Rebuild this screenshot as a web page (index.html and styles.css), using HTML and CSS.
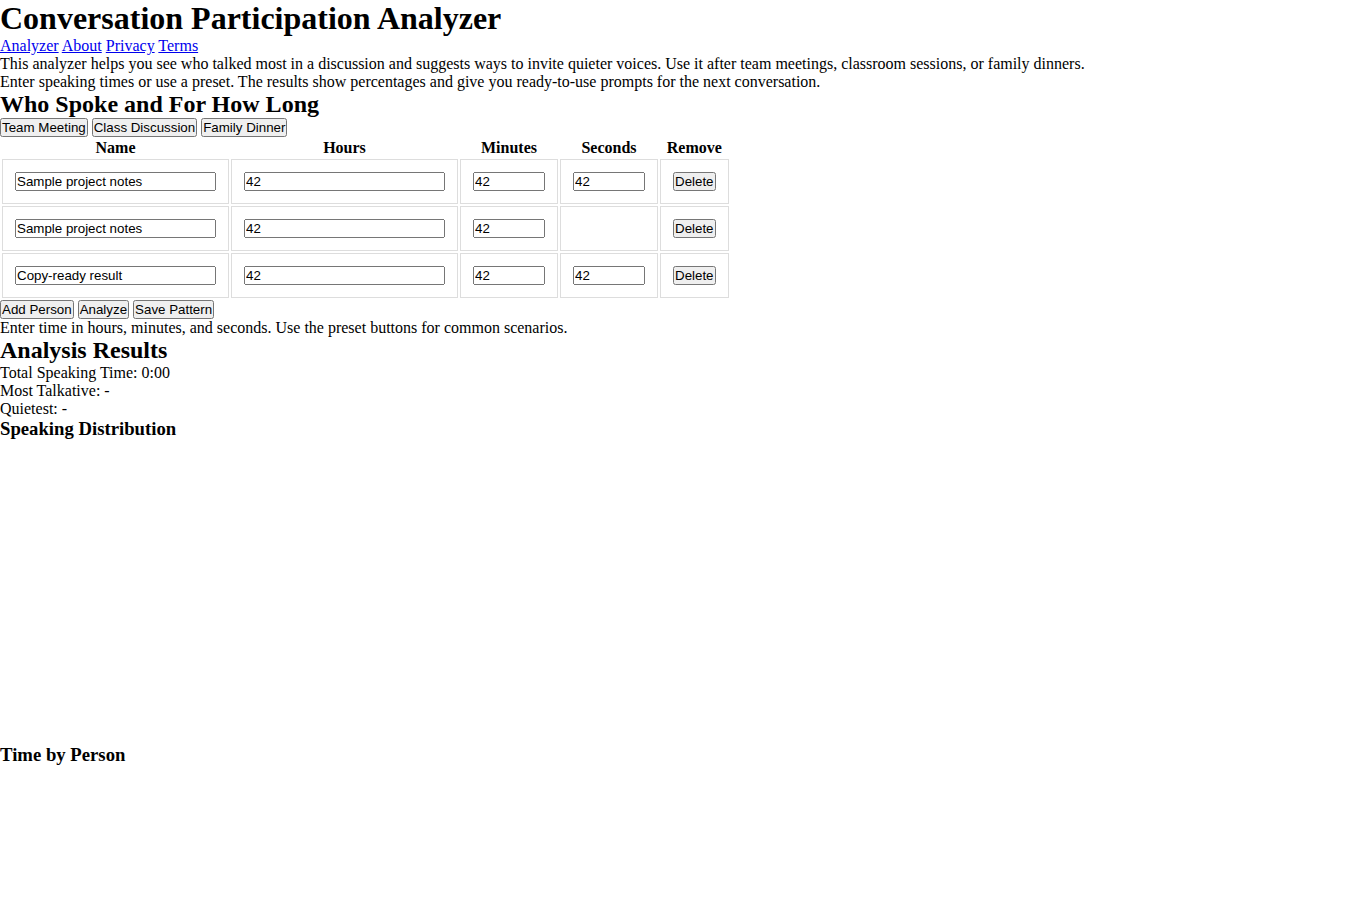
FILE: index.html
```html
<!DOCTYPE html>
<html lang="en">
<head>
<meta charset="utf-8">
<title>Conversation Participation Analyzer</title>
<link rel="stylesheet" href="styles.css">
</head>
<body>
<header>
  <h1>Conversation Participation Analyzer</h1>
  <nav>
    <a href="#analyzer">Analyzer</a>
    <a href="#about">About</a>
    <a href="#privacy">Privacy</a>
    <a href="#terms">Terms</a>
  </nav>
</header>
<main>
  <p>This analyzer helps you see who talked most in a discussion and suggests ways to invite quieter voices. Use it after team meetings, classroom sessions, or family dinners.</p>
  <p>Enter speaking times or use a preset. The results show percentages and give you ready-to-use prompts for the next conversation.</p>

  <section id="analyzer">
    <h2>Who Spoke and For How Long</h2>
    <div class="presets">
      <button type="button">Team Meeting</button>
      <button type="button">Class Discussion</button>
      <button type="button">Family Dinner</button>
    </div>
    <table class="speakers">
      <thead>
        <tr>
          <th>Name</th>
          <th>Hours</th>
          <th>Minutes</th>
          <th>Seconds</th>
          <th>Remove</th>
        </tr>
      </thead>
      <tbody>
        <tr>
          <td><input class="field-wide" type="text" value="Sample project notes"></td>
          <td><input class="field-wide" type="text" value="42"></td>
          <td><input class="field-short" type="text" value="42"></td>
          <td><input class="field-short" type="text" value="42"></td>
          <td><button type="button">Delete</button></td>
        </tr>
        <tr>
          <td><input class="field-wide" type="text" value="Sample project notes"></td>
          <td><input class="field-wide" type="text" value="42"></td>
          <td><input class="field-short" type="text" value="42"></td>
          <td></td>
          <td><button type="button">Delete</button></td>
        </tr>
        <tr>
          <td><input class="field-wide" type="text" value="Copy-ready result"></td>
          <td><input class="field-wide" type="text" value="42"></td>
          <td><input class="field-short" type="text" value="42"></td>
          <td><input class="field-short" type="text" value="42"></td>
          <td><button type="button">Delete</button></td>
        </tr>
      </tbody>
    </table>
    <div class="actions">
      <button type="button">Add Person</button>
      <button type="button">Analyze</button>
      <button type="button">Save Pattern</button>
    </div>
    <p>Enter time in hours, minutes, and seconds. Use the preset buttons for common scenarios.</p>
  </section>

  <section id="results">
    <h2>Analysis Results</h2>
    <p>Total Speaking Time: 0:00</p>
    <p>Most Talkative: -</p>
    <p>Quietest: -</p>
    <h3>Speaking Distribution</h3>
    <canvas class="chart" width="600" height="300"></canvas>
    <h3>Time by Person</h3>
    <canvas class="chart" width="600" height="300"></canvas>
  </section>
</main>
</body>
</html>
```
FILE: styles.css
```css
* {
  margin: 0;
  padding: 0;
}

body {
  font-family: "Liberation Serif", "Times New Roman", serif;
  font-size: 16px;
  color: #000;
  background: #fff;
}

button,
input {
  font-family: "Liberation Sans", Arial, sans-serif;
  font-size: 13.333px;
}

.speakers td {
  border: 1px solid #ddd;
  padding: 12px;
}

.speakers th {
  padding: 0;
}

.field-wide {
  width: 201px;
  box-sizing: border-box;
}

.field-short {
  width: 72px;
  box-sizing: border-box;
}

.chart {
  width: 600px;
  height: 300px;
}
```
